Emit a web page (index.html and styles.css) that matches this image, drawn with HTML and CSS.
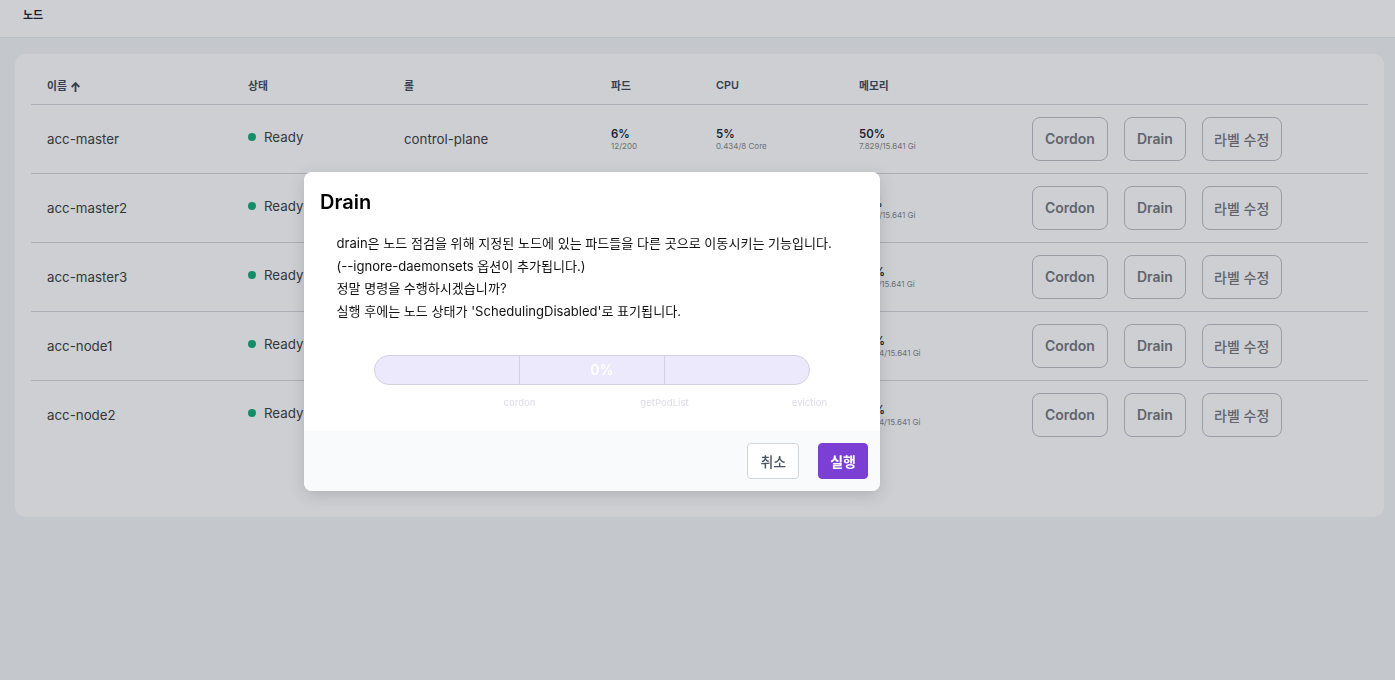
FILE: index.html
```html
<!DOCTYPE html>
<html lang="ko">
<head>
    <meta charset="UTF-8">
    <title>노드</title>
    <link rel="stylesheet" href="styles.css">
</head>
<body>
    <header class="topbar"><span class="topbar-title">노드</span></header>
    <main class="content">
        <section class="card">
            <table class="node-table">
                <thead>
                    <tr>
                        <th class="col-name">이름 <svg class="sort-icon" viewBox="0 0 12 12"><path d="M6 11.5V2M1.8 6L6 1.8 10.2 6" /></svg></th>
                        <th class="col-status">상태</th>
                        <th class="col-role">롤</th>
                        <th class="col-pod">파드</th>
                        <th class="col-cpu">CPU</th>
                        <th class="col-mem">메모리</th>
                        <th></th>
                    </tr>
                </thead>
                <tbody>
                    <tr>
                        <td class="name">acc-master</td>
                        <td><span class="status"><i class="dot"></i>Ready</span></td>
                        <td class="name">control-plane</td>
                        <td><b class="pct">6%</b><small class="sub">12/200</small></td>
                        <td><b class="pct">5%</b><small class="sub">0.434/8 Core</small></td>
                        <td><b class="pct">50%</b><small class="sub">7.829/15.641 Gi</small></td>
                        <td><div class="actions"><button class="btn">Cordon</button><button class="btn">Drain</button><button class="btn btn-label">라벨 수정</button></div></td>
                    </tr>
                    <tr>
                        <td class="name">acc-master2</td>
                        <td><span class="status"><i class="dot"></i>Ready</span></td>
                        <td class="name">control-plane</td>
                        <td><b class="pct">5%</b><small class="sub">10/200</small></td>
                        <td><b class="pct">4%</b><small class="sub">0.331/8 Core</small></td>
                        <td><b class="pct">41%</b><small class="sub">6.412/15.641 Gi</small></td>
                        <td><div class="actions"><button class="btn">Cordon</button><button class="btn">Drain</button><button class="btn btn-label">라벨 수정</button></div></td>
                    </tr>
                    <tr>
                        <td class="name">acc-master3</td>
                        <td><span class="status"><i class="dot"></i>Ready</span></td>
                        <td class="name">control-plane</td>
                        <td><b class="pct">5%</b><small class="sub">10/200</small></td>
                        <td><b class="pct">4%</b><small class="sub">0.352/8 Core</small></td>
                        <td><b class="pct">39%</b><small class="sub">6.105/15.641 Gi</small></td>
                        <td><div class="actions"><button class="btn">Cordon</button><button class="btn">Drain</button><button class="btn btn-label">라벨 수정</button></div></td>
                    </tr>
                    <tr>
                        <td class="name">acc-node1</td>
                        <td><span class="status"><i class="dot"></i>Ready</span></td>
                        <td class="name">worker</td>
                        <td><b class="pct">8%</b><small class="sub">16/200</small></td>
                        <td><b class="pct">9%</b><small class="sub">0.712/8 Core</small></td>
                        <td><b class="pct">68%</b><small class="sub">10.634/15.641 Gi</small></td>
                        <td><div class="actions"><button class="btn">Cordon</button><button class="btn">Drain</button><button class="btn btn-label">라벨 수정</button></div></td>
                    </tr>
                    <tr>
                        <td class="name">acc-node2</td>
                        <td><span class="status"><i class="dot"></i>Ready</span></td>
                        <td class="name">worker</td>
                        <td><b class="pct">7%</b><small class="sub">14/200</small></td>
                        <td><b class="pct">8%</b><small class="sub">0.655/8 Core</small></td>
                        <td><b class="pct">66%</b><small class="sub">10.324/15.641 Gi</small></td>
                        <td><div class="actions"><button class="btn">Cordon</button><button class="btn">Drain</button><button class="btn btn-label">라벨 수정</button></div></td>
                    </tr>
                </tbody>
            </table>
        </section>
    </main>

    <div class="overlay"></div>

    <div class="modal">
        <div class="modal-body">
            <h2 class="modal-title">Drain</h2>
            <div class="modal-text">
                <p>drain은 노드 점검을 위해 지정된 노드에 있는 파드들을 다른 곳으로 이동시키는 기능입니다.</p>
                <p>(--ignore-daemonsets 옵션이 추가됩니다.)</p>
                <p>정말 명령을 수행하시겠습니까?</p>
                <p>실행 후에는 노드 상태가 'SchedulingDisabled'로 표기됩니다.</p>
            </div>
            <div class="progress">
                <div class="progress-bar">
                    <span class="progress-seg"></span>
                    <span class="progress-seg"></span>
                    <span class="progress-seg"></span>
                    <span class="progress-value">0%</span>
                </div>
                <div class="progress-labels">
                    <span>cordon</span>
                    <span>getPodList</span>
                    <span>eviction</span>
                </div>
            </div>
        </div>
        <div class="modal-footer">
            <button class="modal-btn cancel">취소</button>
            <button class="modal-btn run">실행</button>
        </div>
    </div>
</body>
</html>
```

FILE: styles.css
```css
* {
    box-sizing: border-box;
}
body {
    margin: 0;
    height: 680px;
    overflow: hidden;
    background-color: #f3f4f6;
    color: #111827;
    font-family: Inter, "Noto Sans CJK KR", sans-serif;
}
.topbar {
    height: 38px;
    padding: 8px 23px 0;
    background: white;
    border-bottom: 1px solid #e5e7eb;
}
.topbar-title {
    font-size: 11px;
    font-weight: 700;
    line-height: 15px;
    display: block;
}
.content {
    padding: 16px 11px 0 15px;
}
.card {
    height: 463px;
    padding: 15px 16px 0;
    background: white;
    border-radius: 10px;
}
.node-table {
    width: 100%;
    border-collapse: collapse;
    table-layout: fixed;
}
.node-table th {
    height: 35px;
    padding: 0 0 2px 16px;
    text-align: left;
    font-size: 10.8px;
    font-weight: 600;
    color: #374151;
    border-bottom: 1px solid #d1d5db;
}
.col-name { width: 201px; }
.col-status { width: 156px; }
.col-role { width: 207px; }
.col-pod { width: 105px; }
.col-cpu { width: 143px; }
.col-mem { width: 173px; }
.sort-icon {
    width: 11px;
    height: 12px;
    vertical-align: -3px;
    fill: none;
    stroke: #374151;
    stroke-width: 2;
}
.node-table td {
    height: 69px;
    padding: 0 0 0 16px;
    border-bottom: 1px solid #d1d5db;
    font-size: 13.3px;
    color: #333;
}
.node-table tr:last-child td {
    border-bottom: none;
}
.status {
    display: flex;
    align-items: center;
    position: relative;
    top: -2px;
}
.dot {
    width: 8px;
    height: 8px;
    margin-right: 8px;
    border-radius: 50%;
    background-color: #0aa770;
}
.pct {
    display: block;
    font-size: 11.4px;
    line-height: 14px;
    font-weight: 600;
    color: #111827;
}
.sub {
    display: block;
    font-size: 8px;
    line-height: 10px;
    color: #7c7f86;
}
.actions {
    display: flex;
    gap: 16px;
}
.btn {
    height: 44px;
    padding: 0 12px;
    background: white;
    border: 1px solid #b9bcc3;
    border-radius: 8px;
    font-family: inherit;
    font-size: 14px;
    font-weight: 600;
    color: #6e7177;
    white-space: nowrap;
}
.btn-label {
    font-weight: 500;
    width: 80px;
    padding: 0;
}
.overlay {
    position: fixed;
    inset: 0;
    background-color: rgba(55, 65, 81, 0.25);
}
.modal {
    position: fixed;
    top: 172px;
    left: 304px;
    width: 576px;
    height: 319px;
    display: flex;
    flex-direction: column;
    background: white;
    border-radius: 8px;
    overflow: hidden;
    box-shadow: 0 4px 16px rgba(0, 0, 0, 0.15);
}
.modal-body {
    flex: 1;
    padding: 18px 16px 0;
}
.modal-title {
    margin: 0;
    font-size: 20px;
    line-height: 24px;
    font-weight: 600;
    color: #000;
}
.modal-text {
    margin-top: 18px;
    padding-left: 16.5px;
    font-size: 13.05px;
    line-height: 22.6px;
    color: #111;
}
.modal-text p {
    margin: 0;
}
.progress {
    margin: 33px 0 0 54px;
    width: 470px;
}
.progress-bar {
    position: relative;
    display: grid;
    grid-template-columns: 144px 145px 145px;
    width: 436px;
    height: 30px;
    background-color: #ece9fd;
    border: 1px solid #d3d0e2;
    border-radius: 15px;
    overflow: hidden;
}
.progress-seg + .progress-seg {
    border-left: 1px solid #d3d0e2;
}
.progress-value {
    position: absolute;
    inset: 0;
    padding-left: 20px;
    text-align: center;
    font-size: 14px;
    line-height: 28px;
    font-weight: 600;
    color: white;
}
.progress-labels {
    display: grid;
    grid-template-columns: repeat(3, 145px);
    margin: 11px 0 0 73px;
    font-size: 9.6px;
    line-height: 14px;
    text-align: center;
    color: #dcdce6;
}
.modal-footer {
    height: 60px;
    padding: 12px 12px 0 0;
    display: flex;
    justify-content: flex-end;
    gap: 19px;
    background-color: #f9fafb;
}
.modal-btn {
    height: 36px;
    padding: 0 12px;
    border-radius: 4px;
    font-family: inherit;
    font-size: 14px;
    font-weight: 500;
}
.cancel {
    background: white;
    border: 1px solid #d1d5db;
    color: #4b5563;
}
.run {
    padding: 0 11px;
    background-color: #7c3fd4;
    border: 1px solid #7c3fd4;
    color: white;
    font-weight: 600;
}
```
